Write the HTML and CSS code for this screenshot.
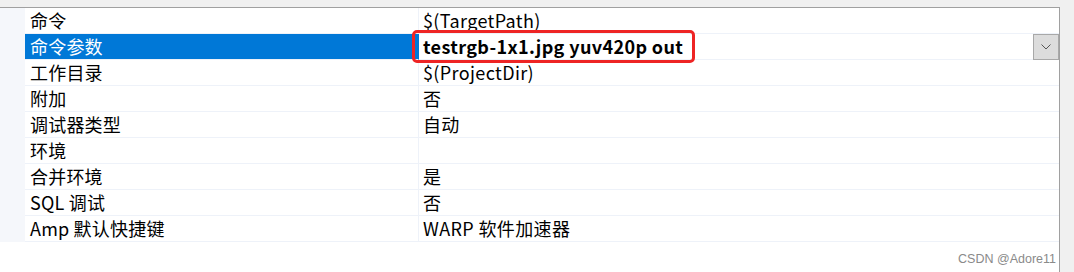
FILE: index.html
```html
<!DOCTYPE html>
<html lang="zh-CN">
<head>
<meta charset="utf-8">
<link rel="stylesheet" href="styles.css">
</head>
<body>
<div class="page">
  <div class="grid">
    <div class="row"><div class="gutter"></div><div class="name">命令</div><div class="value">$(TargetPath)</div></div>
    <div class="row selected"><div class="gutter"></div><div class="name">命令参数</div><div class="value editing"><span class="bold">testrgb-1x1.jpg yuv420p out</span><span class="highlight"></span><span class="drop"><svg width="10" height="6" viewBox="0 0 10 6"><path d="M0.5 0.5 L5 5 L9.5 0.5" fill="none" stroke="#555" stroke-width="1"/></svg></span></div></div>
    <div class="row"><div class="gutter"></div><div class="name">工作目录</div><div class="value">$(ProjectDir)</div></div>
    <div class="row"><div class="gutter"></div><div class="name">附加</div><div class="value">否</div></div>
    <div class="row"><div class="gutter"></div><div class="name">调试器类型</div><div class="value">自动</div></div>
    <div class="row"><div class="gutter"></div><div class="name">环境</div><div class="value"></div></div>
    <div class="row"><div class="gutter"></div><div class="name">合并环境</div><div class="value">是</div></div>
    <div class="row"><div class="gutter"></div><div class="name">SQL 调试</div><div class="value">否</div></div>
    <div class="row"><div class="gutter"></div><div class="name">Amp 默认快捷键</div><div class="value">WARP 软件加速器</div></div>
    <div class="watermark">CSDN @Adore11</div>
  </div>
  <div class="side"></div>
</div>
</body>
</html>
```
FILE: styles.css
```css
* { box-sizing: border-box; }
html, body { margin: 0; padding: 0; }
body {
  background: #f0f0f0;
  font-family: "Noto Sans CJK SC", "Noto Sans", sans-serif;
  font-size: 18px;
  color: #000;
  width: 1074px;
  height: 272px;
  overflow: hidden;
}
.page {
  display: flex;
  padding-top: 7px;
  height: 272px;
}
.grid {
  position: relative;
  width: 1060px;
  height: 265px;
  background: #fff;
  border-top: 1px solid #a0a0a0;
  border-right: 1px solid #a0a0a0;
}
.side { flex: 1; }
.row {
  display: flex;
  height: 26px;
}
.gutter {
  width: 25px;
  background: #f5f7fb;
}
.name {
  width: 394px;
  padding-left: 5px;
  line-height: 25px;
  letter-spacing: 0.2px;
  border-bottom: 1px solid #eef2f9;
  border-right: 1px solid #eef2f9;
  white-space: nowrap;
}
.value {
  position: relative;
  flex: 1;
  padding-left: 4px;
  line-height: 25px;
  letter-spacing: 0.37px;
  border-bottom: 1px solid #eef2f9;
  white-space: nowrap;
}
.selected .name {
  background: #0078d7;
  color: #fff;
  border-right-color: #0078d7;
}
.bold { font-weight: bold; }
.highlight {
  position: absolute;
  left: -7px;
  top: -4px;
  width: 283px;
  height: 33px;
  border: 3px solid #ee2424;
  border-radius: 5px;
}
.drop {
  position: absolute;
  right: 0;
  top: 0;
  width: 26px;
  height: 26px;
  background: #dcdcdc;
  border: 1px solid #a8a8a8;
  display: flex;
  align-items: center;
  justify-content: center;
}
.watermark {
  position: absolute;
  right: 3px;
  bottom: 6px;
  font-family: "Liberation Sans", sans-serif;
  font-size: 12.5px;
  letter-spacing: 0;
  color: #8a8a8a;
}
```
